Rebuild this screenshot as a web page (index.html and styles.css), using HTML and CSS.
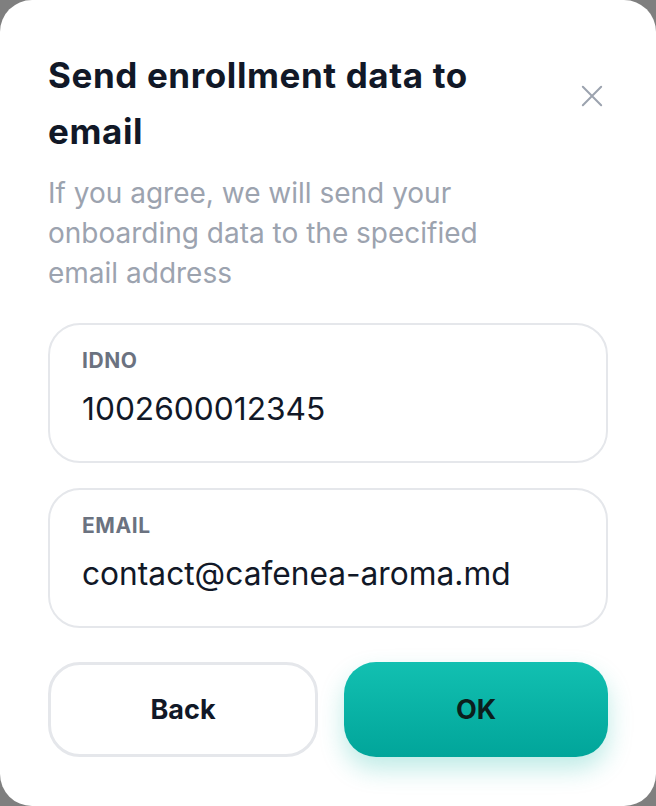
FILE: index.html
```html
<!DOCTYPE html>
<html lang="en">
<head>
<meta charset="utf-8">
<title>Send enrollment data to email</title>
<link rel="stylesheet" href="styles.css">
</head>
<body>
<div class="modal">
  <div class="header">
    <h1 class="title">Send enrollment data to email</h1>
    <button class="close" aria-label="Close">
      <svg width="24" height="24" viewBox="0 0 24 24" fill="none" stroke="currentColor" stroke-width="2.2" stroke-linecap="round"><path d="M2 2L22 22M22 2L2 22"/></svg>
    </button>
  </div>
  <p class="subtitle">If you agree, we will send your onboarding data to the specified email address</p>
  <div class="fields">
    <div class="field">
      <div class="label">IDNO</div>
      <div class="value">1002600012345</div>
    </div>
    <div class="field">
      <div class="label">EMAIL</div>
      <div class="value">contact@cafenea-aroma.md</div>
    </div>
  </div>
  <div class="actions">
    <button class="btn btn-back">Back</button>
    <button class="btn btn-ok">OK</button>
  </div>
</div>
</body>
</html>
```
FILE: styles.css
```css
* { box-sizing: border-box; }
html, body { margin: 0; padding: 0; }
body {
  background: #7f7f7f;
  font-family: Inter, "Noto Sans", sans-serif;
  width: 656px;
  height: 806px;
  overflow: hidden;
}
.modal {
  width: 656px;
  height: 806px;
  background: #ffffff;
  border-radius: 32px;
  padding: 47px 48px 49px 48px;
  display: flex;
  flex-direction: column;
}
.header {
  display: flex;
  justify-content: space-between;
  align-items: flex-start;
}
.title {
  margin: 0;
  max-width: 470px;
  font-size: 35px;
  line-height: 56px;
  font-weight: 700;
  color: #111827;
  letter-spacing: 0.6px;
}
.close {
  margin: 38px 5px 0 0;
  padding: 0;
  border: 0;
  background: none;
  color: #9ca3af;
  width: 22px;
  height: 22px;
  display: flex;
  flex-shrink: 0;
}
.close svg { width: 22px; height: 22px; }
.subtitle {
  margin: 14px 0 0 0;
  max-width: 460px;
  font-size: 28px;
  line-height: 40px;
  color: #9ca3af;
  font-weight: 400;
}
.fields {
  margin-top: 30px;
  display: flex;
  flex-direction: column;
  gap: 25px;
}
.field {
  border: 2px solid #e5e7eb;
  border-radius: 32px;
  padding: 22px 32px 33px 32px;
  height: 140px;
}
.label {
  font-size: 21px;
  line-height: 28px;
  font-weight: 700;
  color: #6b7280;
  letter-spacing: 0.6px;
}
.value {
  margin-top: 14px;
  font-size: 31.7px;
  line-height: 40px;
  color: #111827;
}
.actions {
  margin-top: 34px;
  display: flex;
  gap: 26px;
}
.btn {
  flex: 1;
  height: 95px;
  border-radius: 32px;
  font-family: Inter, "Noto Sans", sans-serif;
  font-size: 27px;
  font-weight: 700;
  cursor: pointer;
}
.btn-back {
  background: #ffffff;
  border: 3px solid #e5e7eb;
  color: #111827;
}
.btn-ok {
  border: 0;
  color: #0b1f1d;
  background: linear-gradient(180deg, #12c0b1 0%, #01a59a 100%);
  box-shadow: 0 12px 24px rgba(20, 184, 166, 0.28);
}
```
